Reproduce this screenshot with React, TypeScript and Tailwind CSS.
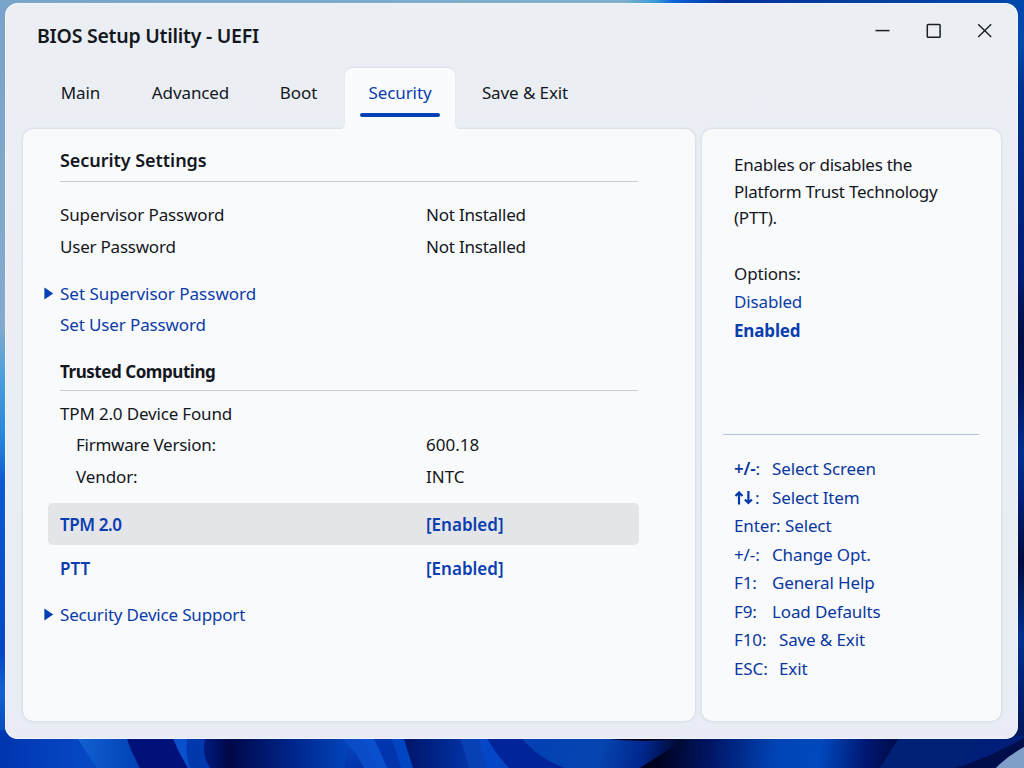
import React from 'react'
import { clsx } from 'clsx'

const tabs = [
  { label: 'Main', className: 'w-[85px]' },
  { label: 'Advanced', className: 'w-[135px]' },
  { label: 'Boot', className: 'w-[81px] mr-[6px]' },
  { label: 'Security', className: 'w-[110px]' },
  { label: 'Save & Exit', className: 'w-[140px]' },
]

const keys = [
  { keys: '+/-', label: 'Select Screen', width: 'w-[38px]', bold: true },
  { keys: 'arrows', label: 'Select Item', width: 'w-[38px]' },
  { keys: 'Enter', label: 'Select', width: 'w-[51px]' },
  { keys: '+/-', label: 'Change Opt.', width: 'w-[38px]' },
  { keys: 'F1', label: 'General Help', width: 'w-[38px]' },
  { keys: 'F9', label: 'Load Defaults', width: 'w-[38px]' },
  { keys: 'F10', label: 'Save & Exit', width: 'w-[45px]' },
  { keys: 'ESC', label: 'Exit', width: 'w-[45px]' },
]

function Wallpaper() {
  return (
    <svg className="col-start-1 row-start-1" width="1024" height="768" viewBox="0 0 1024 768">
      <defs>
        <linearGradient id="left" x1="0" y1="0" x2="0" y2="1">
          <stop offset="0" stopColor="#79a2ca" />
          <stop offset="0.42" stopColor="#86aacd" />
          <stop offset="0.49" stopColor="#4c9fdb" />
          <stop offset="0.57" stopColor="#2487df" />
          <stop offset="0.63" stopColor="#0b58d2" />
          <stop offset="0.85" stopColor="#0446c6" />
          <stop offset="0.9" stopColor="#1263d2" />
          <stop offset="1" stopColor="#0035ae" />
        </linearGradient>
        <linearGradient id="top" x1="0" y1="0" x2="1" y2="0">
          <stop offset="0" stopColor="#79a4c9" />
          <stop offset="0.61" stopColor="#7fafca" />
          <stop offset="0.64" stopColor="#369bd8" />
          <stop offset="0.66" stopColor="#0b5fd4" />
          <stop offset="0.71" stopColor="#00339b" />
          <stop offset="0.85" stopColor="#06409f" />
          <stop offset="1" stopColor="#0048ad" />
        </linearGradient>
        <linearGradient id="right" x1="0" y1="0" x2="0" y2="1">
          <stop offset="0" stopColor="#0047ad" />
          <stop offset="0.06" stopColor="#004aa9" />
          <stop offset="0.12" stopColor="#003191" />
          <stop offset="0.36" stopColor="#001c73" />
          <stop offset="0.44" stopColor="#000d40" />
          <stop offset="0.5" stopColor="#001259" />
          <stop offset="0.59" stopColor="#003090" />
          <stop offset="0.66" stopColor="#001c70" />
          <stop offset="0.73" stopColor="#000a3c" />
          <stop offset="0.83" stopColor="#003190" />
          <stop offset="0.93" stopColor="#001a68" />
          <stop offset="1" stopColor="#00124a" />
        </linearGradient>
        <linearGradient id="petalA" x1="0" y1="0" x2="1" y2="0">
          <stop offset="0" stopColor="#0036b0" />
          <stop offset="0.5" stopColor="#0648c4" />
          <stop offset="1" stopColor="#003cb6" />
        </linearGradient>
        <linearGradient id="petalB" x1="0" y1="0" x2="1" y2="0">
          <stop offset="0" stopColor="#1262d0" />
          <stop offset="1" stopColor="#003db4" />
        </linearGradient>
        <linearGradient id="petalC" x1="0" y1="0" x2="1" y2="0">
          <stop offset="0" stopColor="#001a80" />
          <stop offset="0.18" stopColor="#000848" />
          <stop offset="0.6" stopColor="#002387" />
          <stop offset="1" stopColor="#0043b8" />
        </linearGradient>
        <linearGradient id="petalD" x1="0" y1="0" x2="1" y2="0">
          <stop offset="0" stopColor="#001468" />
          <stop offset="1" stopColor="#0035a8" />
        </linearGradient>
        <linearGradient id="petalE" x1="540" y1="736" x2="690" y2="775" gradientUnits="userSpaceOnUse">
          <stop offset="0" stopColor="#0341b4" />
          <stop offset="0.4" stopColor="#0645b0" />
          <stop offset="0.68" stopColor="#00258a" />
          <stop offset="0.92" stopColor="#00031e" />
        </linearGradient>
        <linearGradient id="petalF" x1="660" y1="745" x2="900" y2="770" gradientUnits="userSpaceOnUse">
          <stop offset="0" stopColor="#00031f" />
          <stop offset="0.22" stopColor="#001768" />
          <stop offset="0.48" stopColor="#0044b6" />
          <stop offset="0.66" stopColor="#0049be" />
          <stop offset="0.85" stopColor="#001873" />
          <stop offset="1" stopColor="#000942" />
        </linearGradient>
      </defs>
      <rect width="512" height="768" fill="url(#left)" />
      <rect x="512" width="512" height="768" fill="url(#right)" />
      <rect width="1024" height="8" fill="url(#top)" />
      <rect y="730" width="180" height="38" fill="url(#petalA)" />
      <path d="M76 736Q86 752 97 768H145L130 736Z" fill="url(#petalB)" />
      <path d="M126 736Q131 752 140 768H200V736Z" fill="#00127a" />
      <path d="M172 736Q178 752 188 768H210V736Z" fill="#0a50cc" />
      <path d="M188 736Q184 752 190 768H225V736Z" fill="#0038ae" />
      <path d="M206 736Q200 752 210 768H345V736Z" fill="url(#petalC)" />
      <path d="M338 736Q354 746 364 768H380L360 736Z" fill="#0a4bc8" />
      <path d="M358 736Q368 746 377 768H390L372 736Z" fill="#0a4fce" />
      <path d="M373 736Q380 750 387 768H405L390 736Z" fill="#0035ad" />
      <path d="M391 736Q396 750 401 768H415L402 736Z" fill="#0046c2" />
      <path d="M403 736L413 768H470L460 736Z" fill="url(#petalD)" />
      <path d="M460 736L469 768H490L477 736Z" fill="#0840b5" />
      <path d="M477 736L487 768H512L486 736Z" fill="#0546c6" />
      <path d="M486 736Q494 752 509 768H570L520 736Z" fill="#00259a" />
      <path d="M520 736Q536 757 564 768H700V736Z" fill="url(#petalE)" />
      <path d="M600 738Q645 744 690 738V736H600Z" fill="#00031c" />
      <path d="M640 768L690 736H930L900 768Z" fill="url(#petalF)" />
      <path d="M956 768Q968 758 978 736H1024V768Z" fill="#001e78" />
      <path d="M956 768Q990 757 1024 738V748L994 768Z" fill="#000f4c" />
      <path d="M880 768L900 736H980Q970 755 956 768Z" fill="#002276" />
      <path d="M996 768Q1006 757 1024 747V768Z" fill="#7f9fc8" />
    </svg>
  )
}

function TabFoot({ className }: { className: string }) {
  return (
    <svg className={clsx('absolute bottom-0', className)} width="5" height="6" viewBox="0 0 5 6">
      <path d="M5 0V6H0V5Q4.5 5 5 0Z" fill="#fafbfd" />
    </svg>
  )
}

function Tabs() {
  return (
    <nav className="flex h-[61px] pl-[33px] tracking-[-0.1px]">
      {tabs.map(({ label, className }) =>
        label === 'Security' ? (
          <div
            key={label}
            className={clsx('relative z-10 flex h-[62px] flex-col items-center rounded-t-[7px] bg-[#fafbfd] pt-3 text-[#0a3db0] shadow-[0_-1px_2px_rgba(60,80,110,0.10)]', className)}
          >
            <TabFoot className="-left-[5px]" />
            <span className="leading-[25px]">{label}</span>
            <span className="mt-2 h-1 w-20 rounded-full bg-[#0540b4]" />
            <TabFoot className="-right-[5px] -scale-x-100" />
          </div>
        ) : (
          <div key={label} className={clsx('pt-3 text-center leading-[25px]', className)}>
            {label}
          </div>
        )
      )}
    </nav>
  )
}

function WindowControls() {
  return (
    <svg width="118" height="16" viewBox="0 0 118 16" fill="none" stroke="#1b1e25" strokeWidth="1.5">
      <path d="M1.5 7.6H15.5" />
      <rect x="53.3" y="1.5" width="12.8" height="12.8" rx="0.8" />
      <path d="M104.2 1.3L117.2 14.1M117.2 1.3L104.2 14.1" strokeWidth="1.4" />
    </svg>
  )
}

interface RowProps {
  label: string
  value?: string
  arrow?: boolean
  className?: string
  labelClass?: string
}

function Row({ label, value, arrow, className, labelClass }: RowProps) {
  return (
    <div className={clsx('grid grid-cols-[16px_366px_1fr] items-center pl-[21px]', className)}>
      <span>
        {arrow && (
          <svg width="10" height="13" viewBox="0 0 10 13">
            <path d="M0.4 0.4L9.2 6.4L0.4 12.6Z" fill="#0540b0" />
          </svg>
        )}
      </span>
      <span className={labelClass}>{label}</span>
      <span>{value}</span>
    </div>
  )
}

function ArrowKeys() {
  return (
    <svg className="mr-px" width="20" height="14" viewBox="0 0 20 14" fill="none" stroke="#0538a8" strokeWidth="2.2">
      <path d="M5 13.5V1.5M1.5 5L5 1.5L8.5 5" />
      <path d="M14.4 0V12M10.9 8.5L14.4 12L17.9 8.5" />
    </svg>
  )
}

function SecurityPanel() {
  return (
    <section className="w-[672px] rounded-[10px] bg-[#f9fafc] pt-[13px] shadow-[0_0_3px_rgba(60,80,110,0.22)]">
      <h2 className="pl-[37px] text-[18px] leading-9 font-semibold tracking-[-0.05px]">Security Settings</h2>
      <div className="mt-[3px] mr-[57px] ml-[37px] h-px bg-[#c8cdd5]" />
      <Row className="mt-[17px] h-8 tracking-[-0.22px]" labelClass="tracking-[-0.12px]" label="Supervisor Password" value="Not Installed" />
      <Row className="h-8 tracking-[-0.22px]" label="User Password" value="Not Installed" />
      <Row className="mt-[15px] h-[31px] text-[#0a3ba8]" arrow label="Set Supervisor Password" />
      <Row className="h-[31px] tracking-[-0.12px] text-[#0a3ba8]" label="Set User Password" />
      <h2 className="mt-[18px] pl-[37px] leading-7 font-bold tracking-[-0.45px]">Trusted Computing</h2>
      <div className="mt-1 mr-[57px] ml-[37px] h-px bg-[#c8cdd5]" />
      <Row className="mt-[7px] h-[31px]" labelClass="tracking-[-0.17px]" label="TPM 2.0 Device Found" />
      <Row className="h-8" labelClass="pl-4 tracking-[-0.25px]" label="Firmware Version:" value="600.18" />
      <Row className="h-[31px]" labelClass="pl-4 tracking-[-0.1px]" label="Vendor:" value="INTC" />
      <div className="mt-[11px] mr-14 ml-[25px] h-[42px] rounded-[5px] bg-[#e4e5e8] pt-px">
        <Row className="-ml-[25px] h-[42px] font-semibold text-[#0a3db0]" labelClass="tracking-[-0.4px]" label="TPM 2.0" value="[Enabled]" />
      </div>
      <Row className="mt-[2px] h-[43px] font-semibold text-[#0a3db0]" label="PTT" value="[Enabled]" />
      <Row className="mt-[9px] h-[31px] text-[#0a3ba8]" labelClass="tracking-[-0.18px]" arrow label="Security Device Support" />
    </section>
  )
}

function HelpPanel() {
  return (
    <aside className="w-[299px] rounded-[10px] bg-[#f9fafc] pt-[23px] shadow-[0_0_3px_rgba(60,80,110,0.22)]">
      <div className="pl-8 leading-[26.5px] tracking-[-0.25px]">
        <p>Enables or disables the</p>
        <p>Platform Trust Technology</p>
        <p>(PTT).</p>
      </div>
      <div className="mt-7 pl-8 leading-[28.5px] tracking-[-0.15px]">
        <p>Options:</p>
        <p className="text-[#0a3ba8]">Disabled</p>
        <p className="font-bold text-[#0a3db0]">Enabled</p>
      </div>
      <div className="mt-[89px] mr-[22px] ml-[21px] h-px bg-[#b3c3df]" />
      <div className="mt-5 pl-8 leading-[28.5px] tracking-[-0.13px] text-[#0a379f]">
        {keys.map(({ keys: name, label, width, bold }) => (
          <div key={label} className="flex h-[28.5px]">
            <span className={clsx('flex items-center', width)}>
              {name === 'arrows' ? <ArrowKeys /> : <span className={clsx(bold && 'font-semibold')}>{name}</span>}:
            </span>
            <span>{label}</span>
          </div>
        ))}
      </div>
    </aside>
  )
}

export default function App() {
  return (
    <div className="grid h-[768px] w-[1024px] overflow-hidden font-['Noto_Sans',sans-serif] text-[17px] text-[#14171d]">
      <Wallpaper />
      <main className="col-start-1 row-start-1 mt-[3px] ml-[5px] flex h-[736px] w-[1013px] flex-col rounded-[13px] bg-gradient-to-b from-[#ebeff4] to-[#e9ecf4] shadow-[inset_0_0_0_1px_rgba(245,248,252,0.7)]">
        <header className="flex h-[65px] justify-between pt-[20px] pr-[26px] pl-8">
          <h1 className="pt-px text-[19.5px] leading-6 font-semibold tracking-[-0.25px]">BIOS Setup Utility - UEFI</h1>
          <WindowControls />
        </header>
        <Tabs />
        <div className="flex h-[592px] gap-[7px] pl-[18px]">
          <SecurityPanel />
          <HelpPanel />
        </div>
      </main>
    </div>
  )
}
